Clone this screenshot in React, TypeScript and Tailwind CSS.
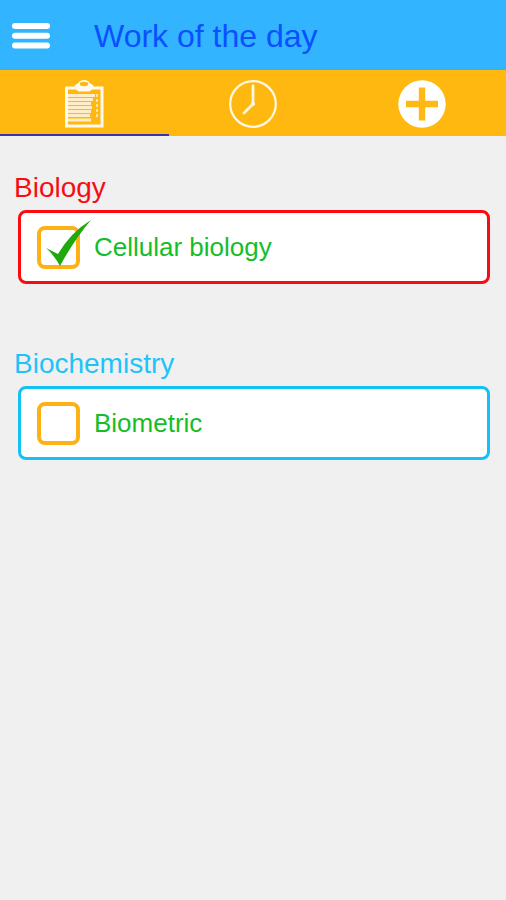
import {useState} from "react";

// Mock data
const initialSubjects = [
  {
    id: 1,
    name: "Biology",
    titleColor: "text-[#f80c14]",
    borderColor: "border-[#f80c10]",
    tasks: [{id: 1, name: "Cellular biology", done: true}]
  },
  {
    id: 2,
    name: "Biochemistry",
    titleColor: "text-[#1ec3fa]",
    borderColor: "border-[#14c0f8]",
    tasks: [{id: 2, name: "Biometric", done: false}]
  }
];

const MenuIcon = () => (
  <svg width="38" height="26" viewBox="0 0 38 26" fill="#fff">
    <rect x="0" y="0" width="38" height="6" rx="3" />
    <rect x="0" y="9.700" width="38" height="6" rx="3" />
    <rect x="0" y="19.400" width="38" height="6" rx="3" />
  </svg>
);

const ClipboardIcon = () => (
  <svg width="40" height="48" viewBox="0 0 40 48" fill="none">
    <rect x="2.500" y="8" width="35.500" height="38" stroke="#fffaf0" strokeWidth="3" />
    <path
      d="M10.500 7Q10.500 4 14 3.500Q15.500 0 20 0T26 3.500Q29.500 4 29.500 7Q29.500 8.500 28 9.500L25.500 11.500H14.500L12 9.500Q10.500 8.500 10.500 7Z"
      fill="#fffaf0"
    />
    <ellipse cx="20" cy="4" rx="4.200" ry="2.200" fill="#ffb80f" />
    <path
      d="M4 15.500H31M4 19.500H29M4 23.500H27M4 27.500H28M4 31.500H27M4 35.500H26M4 40H27"
      stroke="#ffedc8"
      strokeWidth="3"
    />
    <path d="M33 14V38" stroke="#ffe3a8" strokeWidth="2" strokeDasharray="3 2" />
  </svg>
);

const ClockIcon = () => (
  <svg width="48" height="48" viewBox="0 0 48 48" fill="none" stroke="#fff8e6">
    <circle cx="24" cy="24" r="22.800" strokeWidth="2.200" />
    <path d="M24 6V24L15 33" strokeWidth="2.800" strokeLinecap="round" />
    <circle cx="24" cy="24" r="1.600" fill="#fff8e6" />
  </svg>
);

const AddIcon = () => (
  <svg width="48" height="48" viewBox="0 0 48 48">
    <circle cx="24" cy="24" r="23.700" fill="#fff" />
    <path d="M24 7.500V40.500M8 24H40" stroke="#ffb814" strokeWidth="6.400" />
  </svg>
);

const tabs = [
  {id: "tasks", label: "Tasks", icon: <ClipboardIcon />},
  {id: "history", label: "History", icon: <ClockIcon />},
  {id: "add", label: "Add", icon: <AddIcon />}
];

const App = () => {
  const [subjects, setSubjects] = useState(initialSubjects);
  const [activeTab, setActiveTab] = useState("tasks");

  function toggleTask(taskId: number) {
    setSubjects(prev =>
      prev.map(subject => ({
        ...subject,
        tasks: subject.tasks.map(task =>
          task.id === taskId ? {...task, done: !task.done} : task
        )
      }))
    );
  }

  return (
    <div className="min-h-screen bg-[#f0f0f0] font-['Liberation_Sans',Arial,sans-serif]">
      {/* Header */}
      <header className="flex h-[70px] items-center gap-11 bg-[#33b4ff] px-3 pt-0.5">
        <button aria-label="Menu">
          <MenuIcon />
        </button>
        <h1 className="text-[32px] leading-10 text-[#0a50ff]">Work of the day</h1>
      </header>

      {/* Tabs */}
      <nav className="grid h-[66px] grid-cols-3 bg-[#ffb80f]">
        {tabs.map(tab => (
          <button
            key={tab.id}
            aria-label={tab.label}
            onClick={() => setActiveTab(tab.id)}
            className={`flex items-center justify-center border-b-2 pt-1 ${
              activeTab === tab.id ? "border-[#3c32aa]" : "border-transparent"
            }`}>
            {tab.icon}
          </button>
        ))}
      </nav>

      {/* Subjects */}
      <main className="flex flex-col gap-16 px-4 pt-9">
        {subjects.map(subject => (
          <section key={subject.id}>
            <h2 className={`-ml-0.5 text-[28px] leading-8 ${subject.titleColor}`}>
              {subject.name}
            </h2>
            {subject.tasks.map(task => (
              <label
                key={task.id}
                className={`mt-1.5 ml-0.5 flex h-[74px] items-center gap-3.5 rounded-lg border-3 bg-white px-4 ${subject.borderColor}`}>
                <span className="relative flex">
                  <input
                    type="checkbox"
                    checked={task.done}
                    onChange={() => toggleTask(task.id)}
                    className="size-[43px] appearance-none rounded-lg border-4 border-[#ffb014] bg-white"
                  />
                  {task.done && (
                    <svg
                      className="pointer-events-none absolute -top-1.5 left-2"
                      width="48"
                      height="48"
                      viewBox="0 0 48 48"
                      fill="#1eaa0a">
                      <path d="M1 28L13 34Q26 12 46 0Q29 20 15 46Q9 35 1 28Z" />
                    </svg>
                  )}
                </span>
                <span className="text-[26px] leading-8 text-[#14be28]">{task.name}</span>
              </label>
            ))}
          </section>
        ))}
      </main>
    </div>
  );
};

export default App;
